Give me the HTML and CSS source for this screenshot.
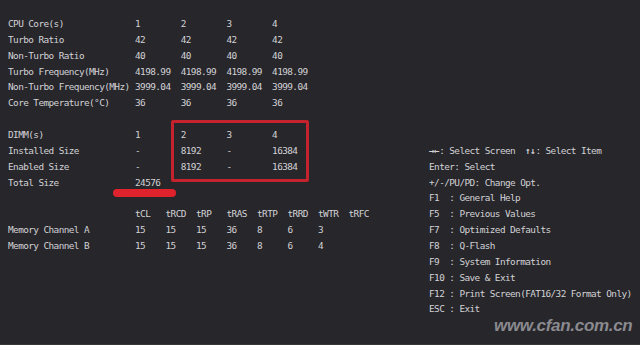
FILE: index.html
```html
<!DOCTYPE html>
<html>
<head>
<meta charset="utf-8">
<title>M.I.T. Current Status</title>
<link rel="stylesheet" href="styles.css">
</head>
<body>
<div class="screen">

<div class="info">
 <div class="grid cpu">
  <span>CPU Core(s)</span><span>1</span><span>2</span><span>3</span><span>4</span>
  <span>Turbo Ratio</span><span>42</span><span>42</span><span>42</span><span>42</span>
  <span>Non-Turbo Ratio</span><span>40</span><span>40</span><span>40</span><span>40</span>
  <span>Turbo Frequency(MHz)</span><span>4198.99</span><span>4198.99</span><span>4198.99</span><span>4198.99</span>
  <span>Non-Turbo Frequency(MHz)</span><span>3999.04</span><span>3999.04</span><span>3999.04</span><span>3999.04</span>
  <span>Core Temperature(°C)</span><span>36</span><span>36</span><span>36</span><span>36</span>
 </div>

 <div class="grid dimm">
  <span>DIMM(s)</span><span>1</span><span>2</span><span>3</span><span>4</span>
  <span>Installed Size</span><span>-</span><span>8192</span><span>-</span><span>16384</span>
  <span>Enabled Size</span><span>-</span><span>8192</span><span>-</span><span>16384</span>
  <span>Total Size</span><span>24576</span><span></span><span></span><span></span>
 </div>

 <div class="grid timing">
  <span></span><span>tCL</span><span>tRCD</span><span>tRP</span><span>tRAS</span><span>tRTP</span><span>tRRD</span><span>tWTR</span><span>tRFC</span>
  <span>Memory Channel A</span><span>15</span><span>15</span><span>15</span><span>36</span><span>8</span><span>6</span><span>3</span><span></span>
  <span>Memory Channel B</span><span>15</span><span>15</span><span>15</span><span>36</span><span>8</span><span>6</span><span>4</span><span></span>
 </div>
</div>

<div class="help">
 <div><span class="keys">→←</span>: Select Screen  <span class="keys">↑↓</span>: Select Item</div>
 <div>Enter: Select</div>
 <div>+/-/PU/PD: Change Opt.</div>
 <div>F1  : General Help</div>
 <div>F5  : Previous Values</div>
 <div>F7  : Optimized Defaults</div>
 <div>F8  : Q-Flash</div>
 <div>F9  : System Information</div>
 <div>F10 : Save &amp; Exit</div>
 <div>F12 : Print Screen(FAT16/32 Format Only)</div>
 <div>ESC : Exit</div>
</div>

<!-- annotations drawn over the screenshot -->
<div class="box-mark"></div>
<div class="line-mark"></div>
<div class="watermark">www.cfan.com.cn</div>

</div>
</body>
</html>
```

FILE: styles.css
```css
body{
	margin: 0;
	background: #27262b;
	color: #d2d2d5;
	font-family: "DejaVu Sans Mono", "Liberation Mono", monospace;
	font-size: 9.4px;
	line-height: 15.86px;
	letter-spacing: -0.58px;
	overflow: hidden;
}

.screen{
	position: relative;
	display: flex;
	align-items: flex-start;
	height: 345px;
	box-sizing: border-box;
	padding: 16px 0 0 8px;
	border-bottom: 1px solid #37363b;
}

/* left info */
.info{
	width: 421px;
}

.grid{
	display: grid;
}
.grid span{
	white-space: pre;
}
.grid + .grid{
	margin-top: 15.86px;
}

.cpu, .dimm{
	grid-template-columns: 127px repeat(4, 45.7px);
}

.timing{
	grid-template-columns: 127px repeat(8, 30.5px);
}

/* right help */
.help{
	margin-top: 126.9px;
}
.help div{
	white-space: pre;
}
.help .keys{
	font-weight: bold;
}

/* marks */
.box-mark{
	position: absolute;
	left: 171px;
	top: 120px;
	width: 138px;
	height: 62px;
	box-sizing: border-box;
	border: 3.5px solid #c4222c;
	border-radius: 2px;
}

.line-mark{
	position: absolute;
	left: 113px;
	top: 189px;
	width: 63px;
	height: 8px;
	border-radius: 4px;
	background: #e0222c;
}

.watermark{
	position: absolute;
	left: 494px;
	top: 316px;
	font-family: "Liberation Sans", Arial, sans-serif;
	font-size: 17px;
	line-height: 20px;
	font-weight: bold;
	font-style: italic;
	letter-spacing: -0.3px;
	color: #8a8a8f;
}
```
